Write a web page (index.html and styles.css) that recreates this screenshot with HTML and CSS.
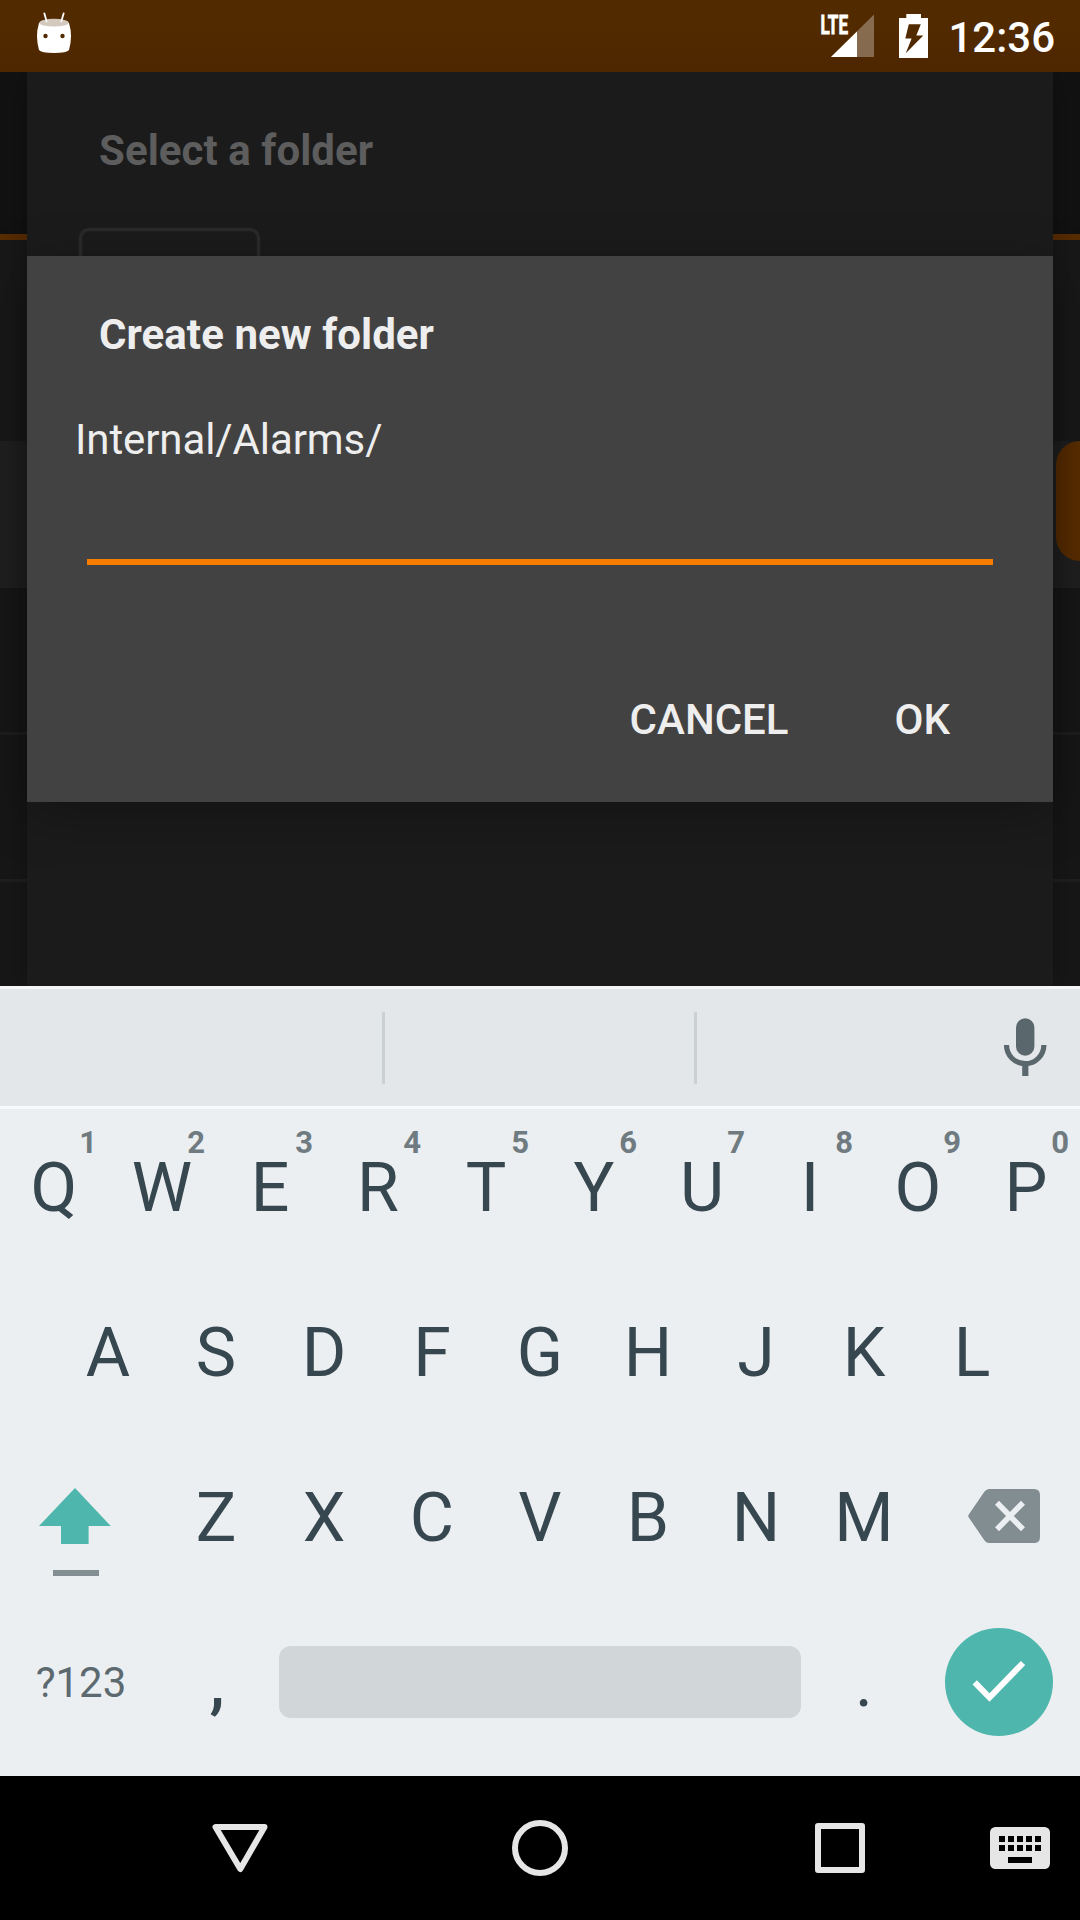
FILE: index.html
```html
<!DOCTYPE html>
<html lang="en">
<head>
<meta charset="utf-8">
<title>Create new folder</title>
<link rel="stylesheet" href="styles.css">
</head>
<body>
<header class="status">
  <svg class="status-robot" width="34" height="42" viewBox="37 12 34 42">
    <path d="M39 23Q54 17 69 23Q73 36 69 50Q67 53 54 53Q41 53 39 50Q35 36 39 23Z" fill="#fff"/>
    <ellipse cx="54" cy="22.7" rx="14.7" ry="3.9" fill="#d3c9bf"/>
    <path d="M44.3 13.3L46.6 21.3M63.7 13.3L61.4 21.3" stroke="#fff" stroke-width="1.8" stroke-linecap="round"/>
    <circle cx="45.5" cy="36" r="2.2" fill="#512900"/><circle cx="62.5" cy="36" r="2.2" fill="#512900"/>
  </svg>
  <div class="status-right">
    <svg class="status-signal" width="60" height="54" viewBox="816 5 60 54">
      <path d="M831 57L874 14.5V57Z" fill="#fff" fill-opacity=".31"/>
      <path d="M831 57L857 31.5V57Z" fill="#fff"/>
      <text x="820.500" y="33.5" textLength="27.500" lengthAdjust="spacingAndGlyphs" class="lte">LTE</text>
    </svg>
    <svg class="status-battery" width="29" height="44" viewBox="899 14 29 44">
      <path fill-rule="evenodd" fill="#fff" d="M899 18H906.3V14H921V18H928V58H899ZM908.8 24.3L905.3 38.4H911.6L905.8 53.3L923.3 35.6H916.3L920.8 24.3Z"/>
    </svg>
    <span class="clock">12:36</span>
  </div>
</header>

<main class="stage">
  <div class="app-header"></div>
  <div class="app-strip"></div>
  <div class="app-current"><div class="app-button"></div></div>
  <div class="app-row"></div>
  <div class="app-row"></div>
  <section class="folder-dialog">
    <h2 class="dialog-title">Select a folder</h2>
    <div class="folder-chip"></div>
  </section>
  <section class="create-dialog">
    <h2 class="dialog-title">Create new folder</h2>
    <p class="path">Internal/Alarms/</p>
    <div class="name-field"></div>
    <div class="actions"><span>CANCEL</span><span>OK</span></div>
  </section>
</main>

<section class="keyboard">
  <div class="suggestions">
    <div class="suggestion first"></div>
    <div class="suggestion second"></div>
    <svg class="mic" width="44" height="60" viewBox="1003 1017 44 60">
      <rect x="1016" y="1018.3" width="18.4" height="37.4" rx="9.2" fill="#5a686e"/>
      <path d="M1006.5 1045a18.7 18.7 0 0 0 37.4 0" fill="none" stroke="#5a686e" stroke-width="5.2"/>
      <path d="M1022.2 1065h6.2v11h-6.2z" fill="#5a686e"/>
    </svg>
  </div>
  <div class="rows">
    <div class="row">
      <span class="key">Q<i>1</i></span><span class="key">W<i>2</i></span><span class="key">E<i>3</i></span><span class="key">R<i>4</i></span><span class="key">T<i>5</i></span><span class="key">Y<i>6</i></span><span class="key">U<i>7</i></span><span class="key">I<i>8</i></span><span class="key">O<i>9</i></span><span class="key">P<i>0</i></span>
    </div>
    <div class="row">
      <span class="key">A</span><span class="key">S</span><span class="key">D</span><span class="key">F</span><span class="key">G</span><span class="key">H</span><span class="key">J</span><span class="key">K</span><span class="key">L</span>
    </div>
    <div class="row">
      <span class="wide-key"><svg width="162" height="156" viewBox="0 1439 162 156">
        <path d="M75 1488L110.7 1526H88.6V1544H61V1526H39Z" fill="#4eb6ac"/>
        <path d="M53 1570h46v6H53z" fill="#828e92"/>
      </svg></span>
      <span class="key">Z</span><span class="key">X</span><span class="key">C</span><span class="key">V</span><span class="key">B</span><span class="key">N</span><span class="key">M</span>
      <span class="wide-key"><svg width="162" height="156" viewBox="918 1439 162 156">
        <path d="M989 1489H1034Q1040 1489 1040 1495V1537Q1040 1543 1034 1543H989Q986.500 1543 984.500 1540.500L968.800 1517.500Q967.700 1516 968.800 1514.500L984.500 1491.500Q986.500 1489 989 1489Z" fill="#828d91"/>
        <path d="M997 1502.700L1023 1529.300M1023 1502.700L997 1529.300" stroke="#eceff2" stroke-width="5.600"/>
      </svg></span>
    </div>
    <div class="row">
      <span class="wide-key symbols">?123</span>
      <span class="key comma">,</span>
      <span class="space"></span>
      <span class="key">.</span>
      <span class="wide-key"><span class="enter"><svg width="108" height="108" viewBox="945 1628 108 108">
        <path d="M974.700 1682.300L989.500 1697.500L1023 1663" fill="none" stroke="#fff" stroke-width="6"/>
      </svg></span></span>
    </div>
  </div>
</section>

<nav class="navbar">
  <svg width="1080" height="144" viewBox="0 1776 1080 144">
    <g fill="none" stroke="#e6e6e6" stroke-width="6" stroke-linejoin="round">
      <path d="M215.500 1827H264.500L240.300 1869Z"/>
      <circle cx="540" cy="1848" r="25"/>
      <rect x="818" y="1826" width="44" height="44"/>
    </g>
    <rect x="990" y="1827" width="60" height="42" rx="5.500" fill="#e6e6e6"/>
    <path d="M999 1836h6v6h-6zM1008 1836h6v6h-6zM1017 1836h6v6h-6zM1026 1836h6v6h-6zM1035 1836h6v6h-6zM999 1845h6v6h-6zM1008 1845h6v6h-6zM1017 1845h6v6h-6zM1026 1845h6v6h-6zM1035 1845h6v6h-6zM1008 1857h24v6h-24z"/>
  </svg>
</nav>
</body>
</html>
```

FILE: styles.css
```css
* { box-sizing: border-box; }
body {
  margin: 0;
  width: 1080px;
  height: 1920px;
  overflow: hidden;
  display: flex;
  flex-direction: column;
  background: #000;
  font-family: Roboto, "Noto Sans", sans-serif;
}
svg { display: block; flex: none; }

/* Status bar */
.status {
  height: 72px;
  flex: none;
  display: flex;
  justify-content: space-between;
  align-items: flex-start;
  padding: 5px 25px 0 37px;
  background: linear-gradient(#522a00 40%, #4d2600);
  color: #fff;
}
.status-robot { margin-top: 7px; }
.status-right { display: flex; }
.status-signal { margin: 0 23px 0 0; overflow: visible; }
.status-battery { margin: 9px 20px 0 0; }
.clock { font-size: 42px; font-weight: 500; line-height: 50px; margin-top: 8px; }
.lte { font-size: 26px; font-weight: 700; fill: #fff; stroke: #fff; stroke-width: .8px; }

/* Dimmed screen behind the dialogs */
.stage {
  position: relative;
  height: 914px;
  flex: none;
  overflow: hidden;
  background: #171717;
}
.app-header { height: 168px; background: #121212; border-bottom: 6px solid #5a2d00; }
.app-strip { height: 201px; background: #191919; }
.app-current { height: 147px; background: #202020; display: flex; justify-content: flex-end; }
.app-button { width: 24px; height: 120px; border-radius: 24px 0 0 24px; background: #5a2d00; }
.app-row { height: 147px; border-bottom: 3px solid #1f1f1f; }

/* Dialogs */
.folder-dialog {
  position: absolute;
  left: 27px;
  right: 27px;
  top: 0;
  bottom: 0;
  padding: 54px 52px 0;
  background: #1b1b1b;
  box-shadow: 0 0 30px rgba(0, 0, 0, .3);
}
.dialog-title { margin: 0; padding-left: 20px; font-size: 42px; line-height: 50px; font-weight: 700; letter-spacing: .06px; }
.folder-dialog .dialog-title { color: #5d5d5d; }
.folder-chip {
  width: 181px;
  height: 120px;
  margin-top: 52px;
  border: 3px solid #2a2a2a;
  border-radius: 10px;
  box-shadow: 0 0 2px #2a2a2a, inset 0 0 2px #2a2a2a;
}
.create-dialog {
  position: absolute;
  left: 27px;
  top: 184px;
  width: 1026px;
  height: 546px;
  padding: 54px 60px 0 48px;
  background: #424242;
  color: #eee;
  box-shadow: 0 12px 50px rgba(0, 0, 0, .28);
}
.create-dialog .dialog-title { padding-left: 24px; }
.path { margin: 55px 0 0; font-size: 42px; line-height: 50px; letter-spacing: -.1px; }
.name-field { height: 100px; margin: 0 0 0 12px; border-bottom: 6px solid #f77d00; }
.actions {
  display: flex;
  justify-content: flex-end;
  gap: 106px;
  margin-top: 130px;
  padding-right: 43px;
  font-size: 42px;
  line-height: 50px;
  font-weight: 500;
}

/* Keyboard */
.keyboard { height: 790px; flex: none; background: #eceff2; color: #37474f; }
.suggestions {
  height: 123px;
  display: flex;
  align-items: center;
  background: #e4e7ea;
  border-top: 3px solid #f5f7f7;
  border-bottom: 3px solid #f7f9fa;
}
.suggestion { height: 72px; border-right: 3px solid #cbd0d3; }
.first { width: 385px; }
.second { width: 312px; }
.mic { margin: -2px 33px 0 auto; }
.rows { display: flex; flex-direction: column; gap: 9px; }
.row { height: 156px; display: flex; justify-content: center; align-items: center; }
.key {
  position: relative;
  flex: none;
  width: 108px;
  height: 156px;
  padding-top: 1px;
  line-height: 156px;
  text-align: center;
  font-size: 68px;
}
.key i {
  position: absolute;
  right: 11px;
  top: 16px;
  font-size: 31px;
  line-height: 36px;
  font-style: normal;
  font-weight: 700;
  color: #6f7b80;
}
.comma { font-weight: 500; padding-left: 2px; }
.wide-key { width: 162px; flex: none; display: flex; justify-content: center; align-items: center; }
.symbols { font-size: 42px; color: #5c6a70; }
.space { width: 522px; height: 72px; margin: 0 9px; border-radius: 12px; background: #d1d6d9; }
.enter { width: 108px; height: 108px; border-radius: 50%; background: #4eb6ac; }

.navbar { height: 144px; flex: none; background: #000; }
```
